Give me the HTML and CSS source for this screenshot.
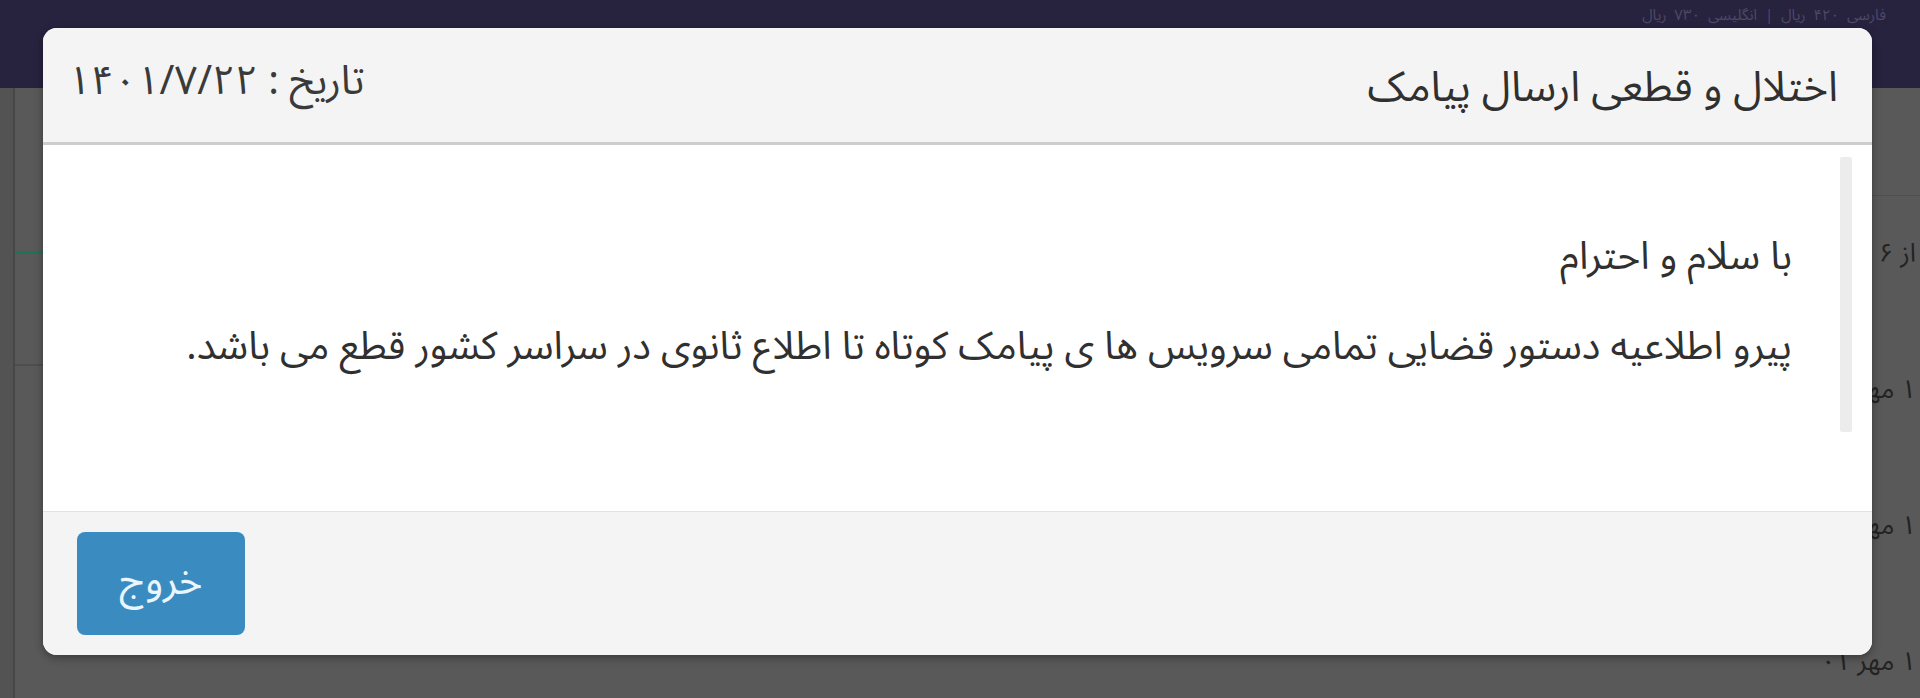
FILE: index.html
```html
<!DOCTYPE html>
<html lang="fa" dir="rtl">
<head>
<meta charset="utf-8">
<title>اختلال و قطعی ارسال پیامک</title>
<link rel="stylesheet" href="styles.css">
</head>
<body>
<div class="page">
  <header class="topbar">
    <span class="tariff">فارسی ۴۲۰ ریال | انگلیسی ۷۳۰ ریال</span>
  </header>
  <div class="content">
    <div class="right-col">
      <div class="row"><span>از ۶</span></div>
      <div class="row"><span>۱ مهر</span></div>
      <div class="row"><span>۱ مهر</span></div>
      <div class="row last"><span>۱ مهر ۰۱</span></div>
    </div>
    <div class="spacer"></div>
    <div class="left-panel">
      <div class="panel-head"></div>
    </div>
    <div class="side-edge"></div>
  </div>
</div>

<div class="modal">
  <div class="modal-header">
    <h4 class="modal-title">اختلال و قطعی ارسال پیامک</h4>
    <span class="modal-date">تاریخ : ۱۴۰۱/۷/۲۲</span>
  </div>
  <div class="modal-body">
    <div class="scroll-track"></div>
    <div class="message">
      <p class="greeting">با سلام و احترام</p>
      <p class="text">پیرو اطلاعیه دستور قضایی تمامی سرویس ها ی پیامک کوتاه تا اطلاع ثانوی در سراسر کشور قطع می باشد.</p>
    </div>
  </div>
  <div class="modal-footer">
    <button class="btn-exit" type="button">خروج</button>
  </div>
</div>
</body>
</html>
```

FILE: styles.css
```css
* { box-sizing: border-box; }

html, body {
  margin: 0;
  padding: 0;
  height: 698px;
  overflow: hidden;
}

body {
  background: #595959;
  font-family: "Noto Sans Arabic", "DejaVu Sans", sans-serif;
  color: #333;
}

.page {
  display: flex;
  flex-direction: column;
  height: 698px;
  overflow: hidden;
}

.topbar {
  height: 88px;
  flex: none;
  background: #27223e;
  display: flex;
  justify-content: flex-start;
  align-items: flex-start;
  padding: 4px 34px 0 0;
}

.tariff {
  display: block;
  color: #4d4968;
  font-size: 15px;
  line-height: 20px;
  padding-top: 1px;
  white-space: nowrap;
  word-spacing: 4px;
}

.content {
  flex: 1;
  min-height: 0;
  display: flex;
  overflow: hidden;
}

/* right column of the page behind the modal */
.right-col {
  width: 260px;
  flex: none;
  margin-top: 107px;
  border-top: 1px solid #4f4f4f;
  display: flex;
  flex-direction: column;
}

.row {
  height: 136px;
  flex: none;
  color: #232323;
  font-size: 26px;
  line-height: 32px;
  padding: 42px 4px 0 0;
}

.row.last {
  height: 90px;
}

.spacer {
  flex: 1;
}

.left-panel {
  width: 300px;
  flex: none;
  margin-top: 163px;
  border-top: 3px solid #1e7456;
}

.panel-head {
  height: 112px;
  border-bottom: 2px solid #4e4e4e;
}

.side-edge {
  width: 15px;
  flex: none;
  background: #535353;
  border-right: 2px solid #474747;
}

/* Modal */
.modal {
  position: absolute;
  left: 43px;
  top: 28px;
  width: 1829px;
  height: 627px;
  border-radius: 14px;
  overflow: hidden;
  background: #fff;
  display: flex;
  flex-direction: column;
  box-shadow: 0 3px 8px rgba(0, 0, 0, 0.35);
}

.modal-header {
  height: 117px;
  flex: none;
  background: #f4f4f4;
  border-bottom: 3px solid #cdcdcd;
  display: flex;
  align-items: center;
  justify-content: space-between;
  padding: 0 34px 0 25px;
}

.modal-title {
  margin: 0;
  padding-top: 6px;
  font-weight: normal;
  font-size: 42px;
  line-height: 50px;
  color: #303030;
}

.modal-date {
  font-size: 40px;
  line-height: 50px;
  color: #3a3a3a;
  margin-bottom: 6px;
}

.modal-body {
  flex: none;
  height: 366px;
  background: #fff;
  display: flex;
  align-items: flex-start;
  padding: 12px 20px 0 0;
  gap: 48px;
}

.scroll-track {
  flex: none;
  width: 12px;
  height: 275px;
  background: #ececec;
  border-radius: 2px;
}

.message {
  flex: 1;
  padding-top: 80px;
}

.message p {
  margin: 0;
  font-size: 39px;
  line-height: 40px;
  color: #303030;
  white-space: nowrap;
}

.message .greeting {
  margin-bottom: 50px;
}

.modal-footer {
  flex: 1;
  background: #f4f4f4;
  border-top: 1px solid #e2e2e2;
  display: flex;
  justify-content: flex-end;
  align-items: flex-start;
  padding: 20px 34px;
}

.btn-exit {
  width: 168px;
  height: 103px;
  border: none;
  border-radius: 8px;
  background: #3a8cc0;
  color: #eaf6ff;
  font-family: inherit;
  font-size: 40px;
  line-height: 50px;
  padding: 0 0 4px 0;
}
```
